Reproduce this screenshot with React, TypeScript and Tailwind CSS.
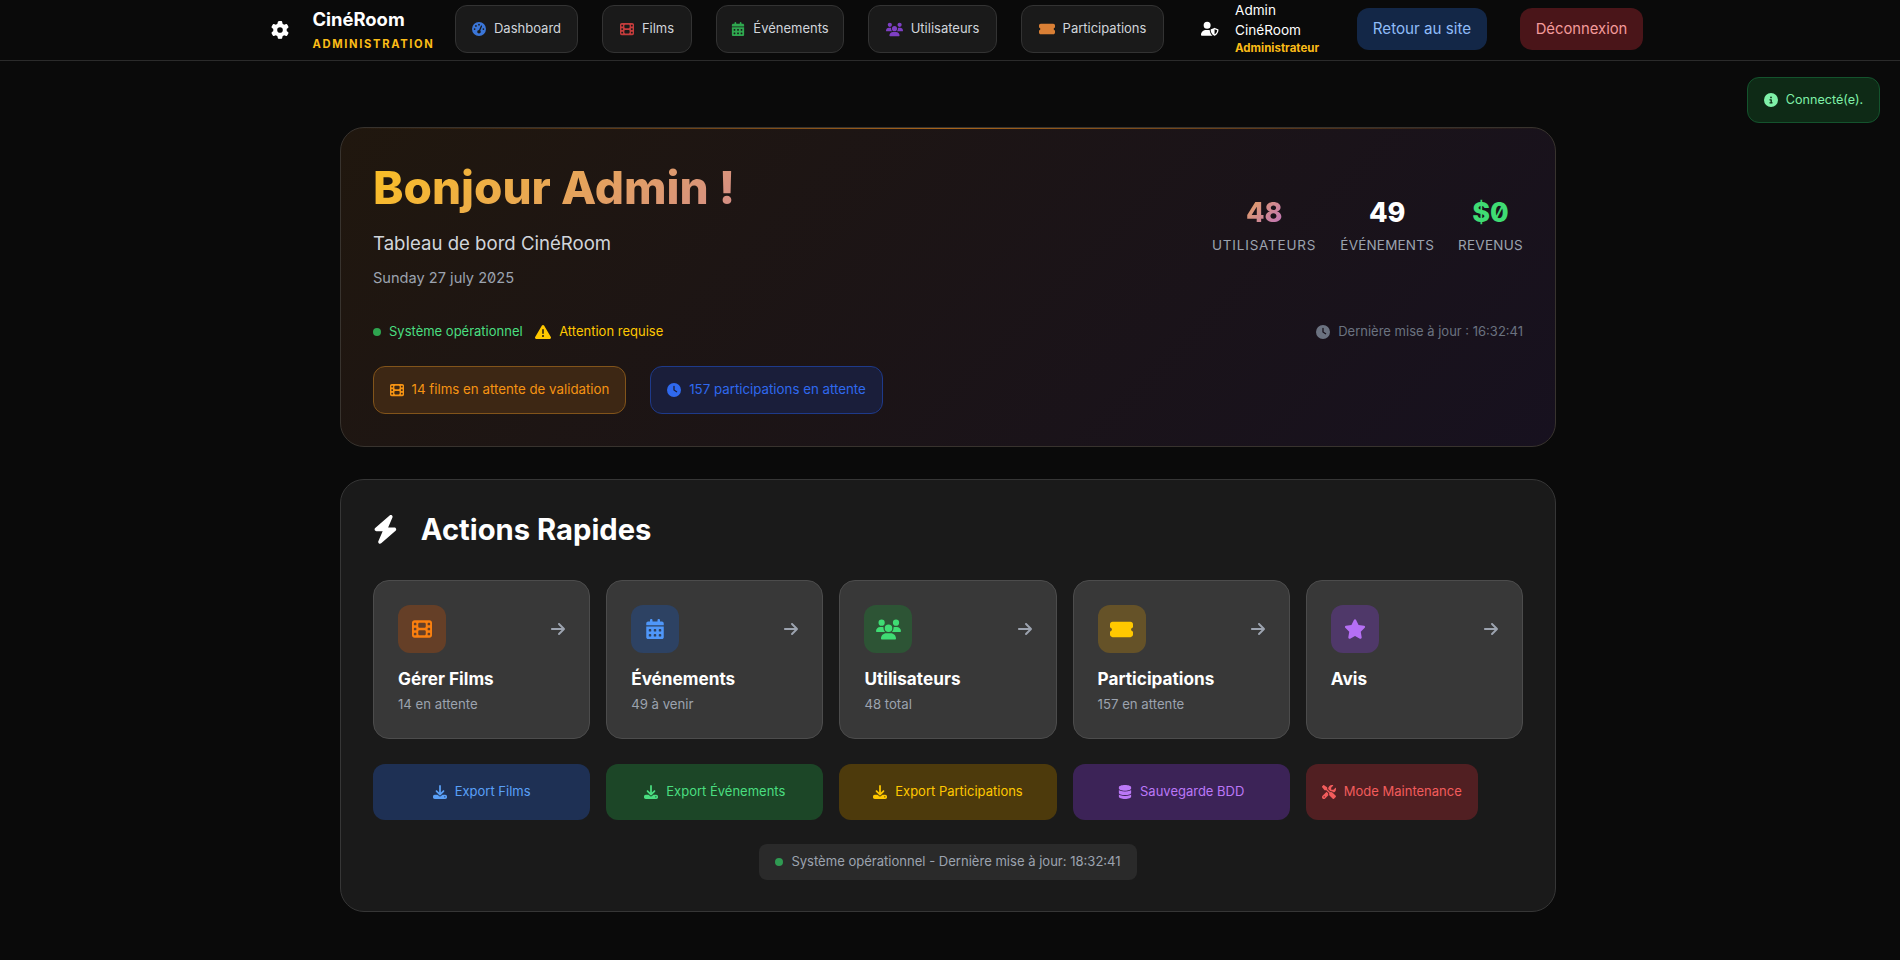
import React from 'react';
import {
  FaGear, FaGaugeHigh, FaFilm, FaCalendarDays, FaUsers, FaTicketSimple, FaUserShield, FaCircleInfo,
  FaTriangleExclamation, FaClock, FaBolt, FaArrowRight, FaStar, FaDownload, FaDatabase, FaScrewdriverWrench,
} from 'react-icons/fa6';

const navLinks = [
  { label: 'Dashboard', Icon: FaGaugeHigh, color: 'text-[#3b76d8] text-[14px]', w: 'w-[123px]' },
  { label: 'Films', Icon: FaFilm, color: 'text-[#c43c3c] text-[14px]', w: 'w-[90px]' },
  { label: 'Événements', Icon: FaCalendarDays, color: 'text-[#2fa84f] text-[14px]', w: 'w-[128px]' },
  { label: 'Utilisateurs', Icon: FaUsers, color: 'text-[#7e3fc4] text-[17px]', w: 'w-[129px]' },
  { label: 'Participations', Icon: FaTicketSimple, color: 'text-[#d97f35] text-[16px]', w: 'w-[143px]' },
];

const actions = [
  { title: 'Gérer Films', sub: '14 en attente', Icon: FaFilm, box: 'bg-[#653f27]', color: 'text-[#f97f0f] text-[20px]' },
  { title: 'Événements', sub: '49 à venir', Icon: FaCalendarDays, box: 'bg-[#2d4263]', color: 'text-[#4f97fa] text-[20px]' },
  { title: 'Utilisateurs', sub: '48 total', Icon: FaUsers, box: 'bg-[#2d5435]', color: 'text-[#3fdc73] text-[25px]' },
  { title: 'Participations', sub: '157 en attente', Icon: FaTicketSimple, box: 'bg-[#655228]', color: 'text-[#ffc800] text-[23px]' },
  { title: 'Avis', sub: '', Icon: FaStar, box: 'bg-[#4f3869]', color: 'text-[#b56ff5] text-[22px]' },
];

const exportsList = [
  { label: 'Export Films', Icon: FaDownload, cls: 'bg-[#1e3054] text-[#5aa0f8]' },
  { label: 'Export Événements', Icon: FaDownload, cls: 'bg-[#1c4627] text-[#4ade80]' },
  { label: 'Export Participations', Icon: FaDownload, cls: 'bg-[#4d3a0c] text-[#ffc800]' },
  { label: 'Sauvegarde BDD', Icon: FaDatabase, cls: 'bg-[#3c2357] text-[#bb78f7]' },
  { label: 'Mode Maintenance', Icon: FaScrewdriverWrench, cls: 'bg-[#511f22] text-[#f25c5c] w-[172px]' },
];

function Stat({ value, label, cls, track }: { value: string; label: string; cls: string; track: string }) {
  return (
    <div className="text-center">
      <div className={`text-[27px] leading-[34px] font-extrabold ${cls}`}>{value}</div>
      <div className={`mt-[5px] text-[13.5px] leading-[20px] text-[#9ca3af] ${track}`}>{label}</div>
    </div>
  );
}

export default function App() {
  return (
    <div className="relative min-h-screen overflow-hidden bg-[#0a0a0a] text-white font-[Inter,sans-serif] [font-feature-settings:'zero']">
      <nav className="h-[61px] border-b border-[#2b2b2b] bg-[#0a0a0a] flex items-center pl-[271px]">
        <div className="flex items-center mt-[-2px]">
          <FaGear className="mt-[2px] text-[18px] text-white" />
          <div className="ml-[23.5px] w-[123px]">
            <div className="text-[18.4px] leading-[24px] font-bold text-white">CinéRoom</div>
            <div className="mt-[6px] text-[11.2px] leading-[14px] font-bold tracking-[1.65px] text-[#fbbc17] whitespace-nowrap">ADMINISTRATION</div>
          </div>
          <div className="ml-[19.5px] flex items-center gap-[24px]">
            {navLinks.map(({ label, Icon, color, w }) => (
              <div key={label} className={`${w} h-[48px] flex items-center justify-center gap-[8px] rounded-[12px] border border-[#333333] bg-[#1a1a1a] text-[13px] text-[#d1d5db]`}>
                <Icon className={color} />
                <span>{label}</span>
              </div>
            ))}
          </div>
          <FaUserShield className="ml-[37px] text-[17.5px] text-white" />
          <div className="ml-[16.5px] w-[88px] mb-[2px]">
            <div className="text-[13.6px] leading-[20px] text-white">Admin</div>
            <div className="text-[13.6px] leading-[20px] text-white">CinéRoom</div>
            <div className="text-[11.5px] leading-[16px] font-bold text-[#fbbc17] whitespace-nowrap">Administrateur</div>
          </div>
          <div className="ml-[34px] w-[130px] h-[42px] flex items-center justify-center rounded-[12px] bg-[#132747] text-[15.2px] text-[#8fbcf8]">Retour au site</div>
          <div className="ml-[33px] w-[123px] h-[42px] flex items-center justify-center rounded-[12px] bg-[#4a1519] text-[14.8px] text-[#f49b9b]">Déconnexion</div>
        </div>
      </nav>

      <div className="absolute right-[20px] top-[77px] w-[133px] h-[46px] flex items-center justify-center gap-[8px] rounded-[12px] border border-[#14532d] bg-[#0e2a16] text-[12.6px] text-[#7ff0a8]">
        <FaCircleInfo className="text-[14px]" />
        <span>Connecté(e).</span>
      </div>

      <main className="pl-[340px] pt-[66px] w-[1556px]">
        <section className="relative h-[320px] rounded-[24px] border border-[#38332e] bg-[linear-gradient(135deg,#20170e,#17111f)] p-[32px] overflow-hidden">
          <div className="absolute left-0 right-0 top-0 h-[1px] bg-linear-to-r from-transparent via-[#a8641a] to-transparent" />
          <div className="flex items-center justify-between">
            <div>
              <h1 className="mt-[1px] w-[830px] text-[45.9px] leading-[54px] font-extrabold bg-[linear-gradient(135deg,#fbbf24,#a855f7)] bg-clip-text text-transparent">Bonjour Admin !</h1>
              <div className="mt-[13px] text-[18.6px] leading-[30px] text-[#d1d5db]">Tableau de bord CinéRoom</div>
              <div className="mt-[8px] text-[14.6px] leading-[24px] text-[#9ca3af]">Sunday 27 july 2025</div>
            </div>
            <div className="flex gap-[24px]">
              <Stat value="48" label="UTILISATEURS" cls="bg-[linear-gradient(135deg,#fbbf24,#a855f7)] bg-clip-text text-transparent" track="tracking-[0.8px]" />
              <Stat value="49" label="ÉVÉNEMENTS" cls="text-white" track="tracking-[0.2px]" />
              <Stat value="$0" label="REVENUS" cls="text-[#3fdc73]" track="tracking-[0.27px]" />
            </div>
          </div>
          <div className="mt-[32px] h-[20px] flex items-center justify-between text-[13px]">
            <div className="flex items-center">
              <span className="w-[8px] h-[8px] rounded-full bg-[#2ea44f]" />
              <span className="ml-[8px] text-[#4ade80]">Système opérationnel</span>
              <FaTriangleExclamation className="ml-[12.5px] text-[16px] text-[#ffc800]" />
              <span className="ml-[8px] text-[#ffc800]">Attention requise</span>
            </div>
            <div className="flex items-center text-[#6b7280]">
              <FaClock className="text-[14px]" />
              <span className="ml-[8px]">Dernière mise à jour : 16:32:41</span>
            </div>
          </div>
          <div className="mt-[24px] flex gap-[24px] text-[13.3px]">
            <div className="w-[253px] h-[48px] flex items-center justify-center gap-[8px] rounded-[12px] border border-[#82541a] bg-[#3d2714] text-[#f59313]">
              <FaFilm className="text-[14px]" />
              <span>14 films en attente de validation</span>
            </div>
            <div className="w-[233px] h-[48px] flex items-center justify-center gap-[8px] rounded-[12px] border border-[#1e3a8a] bg-[#1a1e3a] text-[#2f69ee]">
              <FaClock className="text-[14px]" />
              <span>157 participations en attente</span>
            </div>
          </div>
        </section>

        <section className="mt-[32px] h-[433px] rounded-[24px] border border-[#363636] bg-[#1a1a1a] p-[32px]">
          <div className="flex items-center h-[35px]">
            <FaBolt className="ml-[-2px] text-[28.8px] text-white" />
            <h2 className="ml-[21px] text-[29.2px] leading-[35px] font-bold text-white">Actions Rapides</h2>
          </div>
          <div className="mt-[33px] grid grid-cols-5 gap-[16px]">
            {actions.map(({ title, sub, Icon, box, color }) => (
              <div key={title} className="h-[159px] rounded-[16px] border border-[#4c4c4c] bg-[#383838] px-[24px] pt-[24px]">
                <div className="flex items-center justify-between">
                  <div className={`w-[48px] h-[48px] rounded-[12px] flex items-center justify-center ${box}`}>
                    <Icon className={color} />
                  </div>
                  <FaArrowRight className="mr-[-1px] text-[16px] text-[#9ca3af]" />
                </div>
                <div className="mt-[14px] text-[17.2px] leading-[24px] font-bold text-white">{title}</div>
                <div className="mt-[3px] text-[13.2px] leading-[20px] text-[#9ca3af]">{sub}</div>
              </div>
            ))}
          </div>
          <div className="mt-[25px] grid grid-cols-5 gap-[16px]">
            {exportsList.map(({ label, Icon, cls }) => (
              <div key={label} className={`h-[56px] rounded-[12px] flex items-center justify-center gap-[8px] text-[13px] ${cls}`}>
                <Icon className="text-[14px]" />
                <span>{label}</span>
              </div>
            ))}
          </div>
          <div className="mt-[24px] flex justify-center">
            <div className="h-[36px] px-[16px] rounded-[8px] bg-[#2a2a2a] flex items-center gap-[8px] text-[13.05px] text-[#9ca3af]">
              <span className="w-[8px] h-[8px] rounded-full bg-[#2f9a52]" />
              <span>Système opérationnel - Dernière mise à jour: 18:32:41</span>
            </div>
          </div>
        </section>
      </main>
    </div>
  );
}
